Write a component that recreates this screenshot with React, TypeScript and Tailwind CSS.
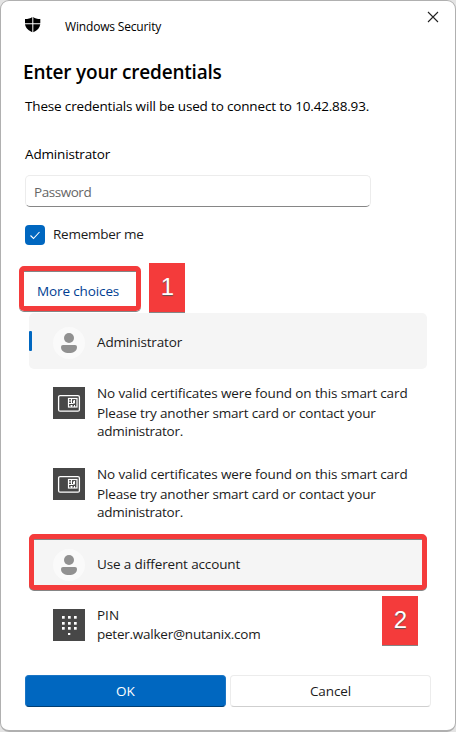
import React from "react";

function Shield() {
  return (
    <svg width="16" height="17" viewBox="0 0 16 17" fill="#000">
      <path d="M7.300 1v6.300H0V3c3 0 5.500-.6 7.300-2z" />
      <path d="M8.300 1c1.500 1.400 4 2 7 2v4.300h-7z" />
      <path d="M0 8.300h7.300v8C3.500 14.500.5 12 0 8.300z" />
      <path d="M8.300 8.300h7c-.5 3.700-3 6.200-7 8z" />
    </svg>
  );
}

function Avatar() {
  return (
    <svg width="32" height="32" viewBox="0 0 32 32" className="shrink-0">
      <circle cx="16" cy="16" r="16" fill="#fafafa" />
      <circle cx="16" cy="11" r="5" fill="#919191" />
      <path d="M10 18h12a2 2 0 0 1 2 2c0 4-3.500 6-8 6s-8-2-8-6a2 2 0 0 1 2-2z" fill="#919191" />
    </svg>
  );
}

function SmartCard() {
  return (
    <svg width="32" height="32" viewBox="0 0 32 32" className="shrink-0 bg-[#474747]" fill="none" stroke="#fff">
      <rect x="5.600" y="8.600" width="20.800" height="15.600" rx="1.500" strokeWidth="1.300" />
      <rect x="15.500" y="11.500" width="8.500" height="8.500" strokeWidth="1.200" />
      <path d="M18.500 11.500v4.500M16 14h2.500M16 16.500h4.500v-3M21.500 13v3.500M18.500 18.500v1.500M21.500 18v2M17.500 18.500h2" strokeWidth="1" />
    </svg>
  );
}

const keys = [
  [9, 7], [15, 7], [21, 7],
  [9, 13], [15, 13], [21, 13],
  [9, 18], [15, 18], [21, 18],
];

function Keypad() {
  return (
    <svg width="32" height="32" viewBox="0 0 32 32" className="shrink-0 bg-[#474747]" fill="#fff">
      {keys.map(([x, y]) => (
        <rect key={`${x}-${y}`} x={x} y={y} width="2.700" height="2.700" />
      ))}
      <rect x="15" y="24" width="2.300" height="2" />
    </svg>
  );
}

function Certificate() {
  return (
    <div className="flex h-[81px] gap-3 pl-6 pt-[18px]">
      <SmartCard />
      <div className="-mt-[4px] whitespace-nowrap">
        <p className="h-5 leading-5 tracking-[-0.12px]">No valid certificates were found on this smart card</p>
        <p className="h-[18px] leading-[21px] tracking-[-0.155px]">Please try another smart card or contact your</p>
        <p className="h-5 leading-5 tracking-[-0.26px]">administrator.</p>
      </div>
    </div>
  );
}

function Badge({ label, place }: { label: string; place: string }) {
  return (
    <div
      className={`absolute flex h-[49px] w-9 items-center justify-center bg-[#f43b3b] font-['Liberation_Sans'] text-[24px] text-white shadow-[0_1px_0_#858585] [text-shadow:0_1px_1px_#555] ${place}`}
    >
      <span className="-mt-[2px] ml-px">{label}</span>
    </div>
  );
}

export default function App() {
  return (
    <div className="h-[732px] w-[456px] bg-[#e4e4e4]">
      <div className="relative flex h-[732px] w-[456px] flex-col overflow-hidden rounded-[9px] border border-b-2 border-[#b0b0b0] bg-white font-['Open_Sans','Noto_Sans',sans-serif] text-[13.5px] text-[#1b1b1b]">
        <header className="flex h-[58px] items-start pl-6 pr-4 pt-[15px] text-black">
          <Shield />
          <span className="ml-6 pt-px text-[12px] leading-5 tracking-[-0.17px]">Windows Security</span>
          <svg width="12" height="12" viewBox="0 0 12 12" className="-mt-[5px] ml-auto" stroke="#222" strokeWidth="1.100">
            <path d="M1 1l10 10M11 1L1 11" />
          </svg>
        </header>

        <h1 className="h-[37px] pl-[22px] text-[19px] font-semibold leading-[26px] tracking-[-0.2px] text-black">
          <span>Enter your credentials</span>
        </h1>
        <p className="h-12 pl-6 leading-5 tracking-[-0.165px] text-black">These credentials will be used to connect to 10.42.88.93.</p>
        <p className="h-[31px] pl-6 leading-5 tracking-[-0.16px] text-black">Administrator</p>

        <div className="ml-6 flex h-8 w-[346px] shrink-0 items-center rounded-[5px] border border-b border-[#ececec] border-b-[#868686] pl-2 pt-[2px] tracking-[-0.45px] text-[#666]">
          <span>Password</span>
        </div>

        <label className="ml-6 mt-[18px] flex h-5 items-center gap-2">
          <span className="flex size-5 items-center justify-center rounded-[4px] bg-[#0067c0]">
            <svg width="12" height="12" viewBox="0 0 12 12" fill="none" stroke="#fff" strokeWidth="1.100">
              <path d="M1.500 6.500l3 3 6-6.500" />
            </svg>
          </span>
          <span className="-mt-[2px] leading-5 tracking-[-0.25px]">Remember me</span>
        </label>

        <div className="ml-[18px] mt-[21px] h-[45px] w-[122px] shrink-0 rounded-[5px] border-[5px] border-[#f43b3b] pl-[13px] pt-[10px] leading-5 tracking-[-0.12px] text-[#003e92] shadow-[0_1px_0_#858585,inset_0_1px_0_#858585]">
          <span>More choices</span>
        </div>

        <ul className="ml-7 mt-[2px] w-[398px]">
          <li className="flex h-14 items-center rounded-[5px] bg-[#f5f5f5]">
            <span className="h-5 w-[3px] rounded-[1px] bg-[#0067c0]" />
            <span className="ml-[21px] mt-[4px] flex">
              <Avatar />
            </span>
            <span className="ml-3 mt-[3px] tracking-[-0.16px]">Administrator</span>
          </li>
          <li>
            <Certificate />
          </li>
          <li>
            <Certificate />
          </li>
          <li className="mt-[3px] flex h-14 items-center rounded-[5px] border-[5px] border-[#f43b3b] bg-[#f5f5f5] pl-[19px] shadow-[0_1px_0_#858585,inset_0_1px_0_#858585]">
            <span className="mt-[5px] flex">
              <Avatar />
            </span>
            <span className="ml-3 mt-[4px] tracking-[-0.14px]">Use a different account</span>
          </li>
          <li className="flex h-[85px] gap-3 pl-6 pt-[19px]">
            <Keypad />
            <div className="-mt-[4px]">
              <p className="h-[19px] leading-5">PIN</p>
              <p className="leading-5 tracking-[-0.24px]">peter.walker@nutanix.com</p>
            </div>
          </li>
        </ul>

        <footer className="ml-6 flex h-8 gap-1">
          <button className="h-8 w-[201px] rounded-[4px] border border-[#1a75c5] border-b-[#003e73] bg-[#0067c0] text-white">OK</button>
          <button className="h-8 w-[201px] rounded-[4px] border border-[#ececec] border-b-[#cfcfcf] bg-white tracking-[-0.1px]">Cancel</button>
        </footer>

        <Badge label="1" place="left-[148px] top-[262px]" />
        <Badge label="2" place="left-[381px] top-[595px]" />
      </div>
    </div>
  );
}
